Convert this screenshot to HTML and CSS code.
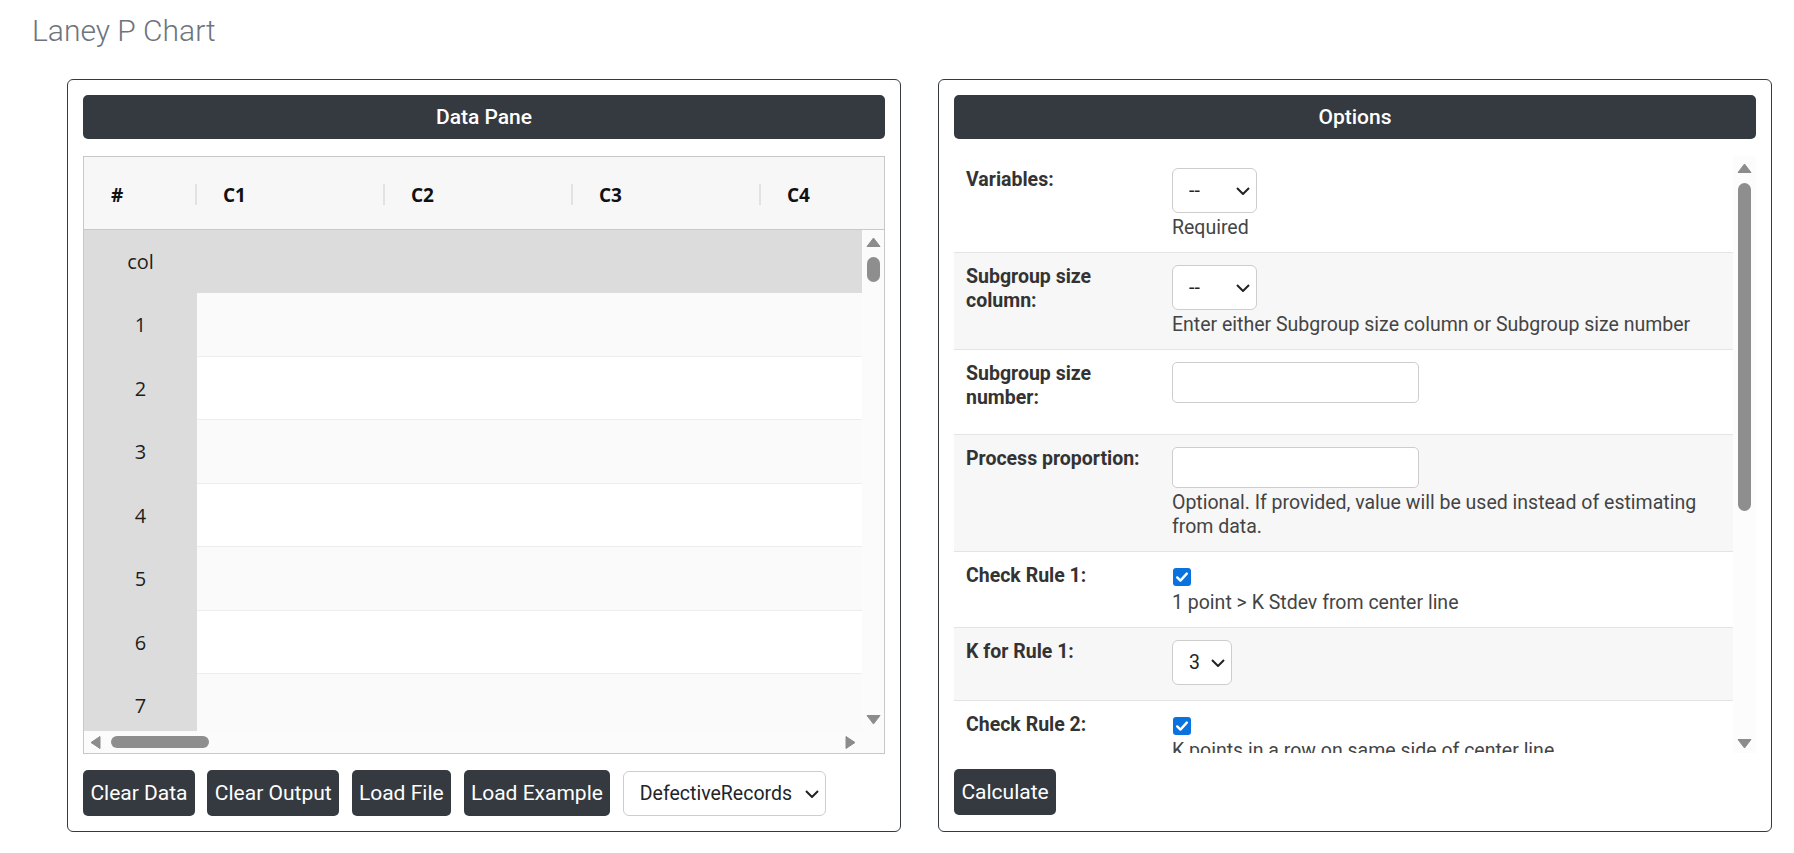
FILE: index.html
```html
<!DOCTYPE html>
<html lang="en">
<head>
    <meta charset="UTF-8">
    <meta name="viewport" content="width=device-width, initial-scale=1.0">
    <title>Laney P Chart</title>
    <link rel="stylesheet" href="styles.css">
</head>
<body>
    <h1 class="page-title">Laney P Chart</h1>

    <div class="panes">
        <!-- left: spreadsheet with the input data -->
        <section class="pane">
            <div class="pane-head">Data Pane</div>

            <div class="sheet">
                <div class="sheet-head">
                    <div class="hc idx"><span>#</span><i class="sep"></i></div>
                    <div class="hc"><span>C1</span><i class="sep"></i></div>
                    <div class="hc"><span>C2</span><i class="sep"></i></div>
                    <div class="hc"><span>C3</span><i class="sep"></i></div>
                    <div class="hc"><span>C4</span><i class="sep"></i></div>
                </div>

                <div class="sheet-body">
                    <div class="srow names">
                        <div class="rh">col</div>
                    </div>
                    <div class="srow"><div class="rh">1</div><div class="cell"></div><div class="cell"></div><div class="cell"></div><div class="cell"></div></div>
                    <div class="srow"><div class="rh">2</div><div class="cell"></div><div class="cell"></div><div class="cell"></div><div class="cell"></div></div>
                    <div class="srow"><div class="rh">3</div><div class="cell"></div><div class="cell"></div><div class="cell"></div><div class="cell"></div></div>
                    <div class="srow"><div class="rh">4</div><div class="cell"></div><div class="cell"></div><div class="cell"></div><div class="cell"></div></div>
                    <div class="srow"><div class="rh">5</div><div class="cell"></div><div class="cell"></div><div class="cell"></div><div class="cell"></div></div>
                    <div class="srow"><div class="rh">6</div><div class="cell"></div><div class="cell"></div><div class="cell"></div><div class="cell"></div></div>
                    <div class="srow"><div class="rh">7</div><div class="cell"></div><div class="cell"></div><div class="cell"></div><div class="cell"></div></div>
                    <div class="srow"><div class="rh">8</div><div class="cell"></div><div class="cell"></div><div class="cell"></div><div class="cell"></div></div>
                </div>

                <div class="vbar sheet-vbar">
                    <svg class="arrow" width="15" height="10" viewBox="0 0 15 10"><path d="M7.5 1 L14 9.5 H1 Z" /></svg>
                    <div class="thumb sheet-thumb"></div>
                    <div class="fill"></div>
                    <svg class="arrow" width="15" height="10" viewBox="0 0 15 10"><path d="M1 0.5 H14 L7.5 9 Z" /></svg>
                </div>

                <div class="hbar">
                    <svg class="arrow" width="11" height="13" viewBox="0 0 11 13"><path d="M1 6.5 L10 0.5 V12.5 Z" /></svg>
                    <div class="hthumb"></div>
                    <div class="fill"></div>
                    <svg class="arrow" width="11" height="13" viewBox="0 0 11 13"><path d="M10 6.5 L1 0.5 V12.5 Z" /></svg>
                </div>
            </div>

            <div class="toolbar">
                <button class="btn">Clear Data</button>
                <button class="btn">Clear Output</button>
                <button class="btn">Load File</button>
                <button class="btn">Load Example</button>
                <div class="pick">
                    <select class="example-pick">
                        <option>DefectiveRecords</option>
                    </select>
                    <svg class="chev" width="14" height="8" viewBox="0 0 14 8"><polyline points="1,1 7,7 13,1" /></svg>
                </div>
            </div>
        </section>

        <!-- right: chart options -->
        <section class="pane">
            <div class="pane-head">Options</div>

            <div class="opts">
                <div class="opt-list">
                    <div class="opt">
                        <div class="opt-label">Variables:</div>
                        <div class="opt-field">
                            <div class="pick">
                                <select class="col-pick"><option>--</option></select>
                                <svg class="chev" width="14" height="8" viewBox="0 0 14 8"><polyline points="1,1 7,7 13,1" /></svg>
                            </div>
                            <div class="note">Required</div>
                        </div>
                    </div>
                    <div class="opt">
                        <div class="opt-label">Subgroup size column:</div>
                        <div class="opt-field">
                            <div class="pick">
                                <select class="col-pick"><option>--</option></select>
                                <svg class="chev" width="14" height="8" viewBox="0 0 14 8"><polyline points="1,1 7,7 13,1" /></svg>
                            </div>
                            <div class="note">Enter either Subgroup size column or Subgroup size number</div>
                        </div>
                    </div>
                    <div class="opt">
                        <div class="opt-label">Subgroup size number:</div>
                        <div class="opt-field">
                            <input class="txt txt-last" type="text">
                        </div>
                    </div>
                    <div class="opt">
                        <div class="opt-label">Process proportion:</div>
                        <div class="opt-field">
                            <input class="txt" type="text">
                            <div class="note">Optional. If provided, value will be used instead of estimating from data.</div>
                        </div>
                    </div>
                    <div class="opt">
                        <div class="opt-label">Check Rule 1:</div>
                        <div class="opt-field">
                            <div class="check-line">
                                <span class="tick"><svg width="18" height="18" viewBox="0 0 18 18"><path d="M4.2 9.4 L7.4 12.6 L13.8 5.6" /></svg></span>
                            </div>
                            <div class="note">1 point &gt; K Stdev from center line</div>
                        </div>
                    </div>
                    <div class="opt">
                        <div class="opt-label">K for Rule 1:</div>
                        <div class="opt-field">
                            <div class="pick">
                                <select class="k-pick"><option>3</option></select>
                                <svg class="chev" width="14" height="8" viewBox="0 0 14 8"><polyline points="1,1 7,7 13,1" /></svg>
                            </div>
                        </div>
                    </div>
                    <div class="opt">
                        <div class="opt-label">Check Rule 2:</div>
                        <div class="opt-field">
                            <div class="check-line">
                                <span class="tick"><svg width="18" height="18" viewBox="0 0 18 18"><path d="M4.2 9.4 L7.4 12.6 L13.8 5.6" /></svg></span>
                            </div>
                            <div class="note">K points in a row on same side of center line</div>
                        </div>
                    </div>
                    <div class="opt">
                        <div class="opt-label">K for Rule 2:</div>
                        <div class="opt-field">
                            <div class="pick">
                                <select class="k-pick"><option>9</option></select>
                                <svg class="chev" width="14" height="8" viewBox="0 0 14 8"><polyline points="1,1 7,7 13,1" /></svg>
                            </div>
                        </div>
                    </div>
                </div>

                <div class="vbar opts-vbar">
                    <svg class="arrow" width="15" height="10" viewBox="0 0 15 10"><path d="M7.5 1 L14 9.5 H1 Z" /></svg>
                    <div class="thumb opts-thumb"></div>
                    <div class="fill"></div>
                    <svg class="arrow" width="15" height="10" viewBox="0 0 15 10"><path d="M1 0.5 H14 L7.5 9 Z" /></svg>
                </div>
            </div>

            <div class="toolbar">
                <button class="btn">Calculate</button>
            </div>
        </section>
    </div>
</body>
</html>
```

FILE: styles.css
```css
* {
    box-sizing: border-box;
}

body {
    margin: 0;
    font-family: Roboto, "Liberation Sans", sans-serif;
    color: #212529;
    background: #fff;
}

.page-title {
    margin: 12px 0 0 32px;
    font-size: 30px;
    font-weight: 300;
    line-height: 38px;
    color: #6c757d;
}

.panes {
    display: grid;
    grid-template-columns: 834px 834px;
    column-gap: 37px;
    margin: 29px 0 0 67px;
}

.pane {
    border: 1px solid #343a40;
    border-radius: 6px;
    padding: 15px;
}

.pane-head {
    height: 44px;
    line-height: 44px;
    text-align: center;
    background-color: #343a40;
    color: #fff;
    border-radius: 5px;
    font-size: 21px;
    font-weight: 500;
}

/* spreadsheet */
.sheet {
    margin-top: 17px;
    height: 598px;
    border: 1px solid #c8c8c8;
    background: #fbfbfb;
    display: grid;
    grid-template-columns: 1fr 22px;
    grid-template-rows: 73px 1fr 22px;
    font-family: "Open Sans", sans-serif;
}

.sheet-head {
    grid-column: 1 / 3;
    display: flex;
    background: #f7f7f7;
    border-bottom: 1px solid #c8c8c8;
    overflow: hidden;
    padding-top: 3px;
}

.hc {
    flex: 0 0 188px;
    display: flex;
    align-items: center;
    justify-content: space-between;
    padding-left: 26px;
    font-size: 19px;
    font-weight: 700;
    color: #111;
}

.hc.idx {
    flex-basis: 113px;
    padding-left: 27px;
}

.sep {
    width: 2px;
    height: 21px;
    background: #e2e2e2;
}

.sheet-body {
    overflow: hidden;
}

.srow {
    display: flex;
    height: 63.5px;
}

.srow.names {
    height: 63px;
    background: #dcdcdc;
}

.rh {
    flex: 0 0 113px;
    display: flex;
    align-items: center;
    justify-content: center;
    background: #dcdcdc;
    font-size: 20px;
    color: #1e1e1e;
}

.cell {
    flex: 0 0 188px;
    border-bottom: 1px solid #ededed;
    background: #fafafa;
}

.srow:nth-child(odd) .cell {
    background: #fff;
}

/* scrollbars */
.vbar {
    display: flex;
    flex-direction: column;
    align-items: center;
}

.sheet-vbar {
    grid-row: 2;
    grid-column: 2;
    padding: 7px 0 6px;
}

.opts-vbar {
    padding: 7px 0 4px;
    background: #fcfcfc;
}

.arrow path {
    fill: #8c8c8c;
    stroke: #8c8c8c;
    stroke-width: 1;
    stroke-linejoin: round;
}

.thumb {
    width: 13px;
    margin-top: 10px;
    border-radius: 7px;
    background: #8e8e8e;
}

.sheet-thumb {
    height: 25px;
}

.opts-thumb {
    height: 328px;
}

.fill {
    flex: 1;
}

.hbar {
    grid-row: 3;
    grid-column: 1;
    display: flex;
    align-items: center;
    padding: 0 6px;
}

.hthumb {
    width: 98px;
    height: 12px;
    margin-left: 10px;
    border-radius: 6px;
    background: #8e8e8e;
}

/* buttons and pickers */
.toolbar {
    margin-top: 16px;
    display: flex;
    align-items: center;
    gap: 12.5px;
}

.btn {
    height: 46px;
    padding: 0 7.4px;
    border: none;
    border-radius: 5px;
    background-color: #343a40;
    color: #fff;
    font-family: Roboto, sans-serif;
    font-size: 21px;
    cursor: pointer;
}

.pick {
    position: relative;
    display: inline-block;
}

.pick select {
    appearance: none;
    -webkit-appearance: none;
    height: 45px;
    border: 1px solid #cdcdcd;
    border-radius: 6px;
    background: #fff;
    color: #212529;
    font-family: Roboto, sans-serif;
    font-size: 19.5px;
    padding: 0 30px 0 16px;
}

.pick .chev {
    position: absolute;
    top: 19px;
    right: 7px;
}

.chev polyline {
    fill: none;
    stroke: #222;
    stroke-width: 2;
}

.example-pick {
    width: 203px;
}

.col-pick {
    width: 85px;
}

.k-pick {
    width: 60px;
}

/* option list */
.opts {
    margin-top: 17px;
    height: 597px;
    display: grid;
    grid-template-columns: 1fr 23px;
    overflow: hidden;
}

.opt-list {
    overflow: hidden;
}

.opt {
    display: grid;
    grid-template-columns: 206px 1fr;
    border-top: 1px solid #e4e4e4;
}

.opt:first-child {
    border-top: none;
}

.opt:nth-child(even) {
    background: #f7f7f7;
}

.opt-label {
    padding: 12px;
    font-size: 19.5px;
    font-weight: 700;
    line-height: 24px;
    color: #333;
}

.opt-field {
    padding: 12px;
    font-size: 19.5px;
    line-height: 24px;
    color: #444;
}

.opt-field .pick {
    display: block;
    width: max-content;
    margin-bottom: 3px;
}

.opt-field .pick select {
    display: block;
}

.k-pick {
    padding-left: 17px;
}

.txt {
    display: block;
    width: 247px;
    height: 41px;
    margin-bottom: 3px;
    border: 1px solid #cdcdcd;
    border-radius: 5px;
    background: #fff;
}

.txt-last {
    margin-bottom: 19px;
}

/* checkbox row: the box sits in a short line above its note */
.check-line {
    height: 26.5px;
    padding-top: 4px;
}

.tick {
    display: block;
    width: 18px;
    height: 18px;
    margin-left: 1px;
    border-radius: 3px;
    background: #0a72de;
}

.tick svg {
    display: block;
}

.tick path {
    fill: none;
    stroke: #fff;
    stroke-width: 2.4;
    stroke-linecap: round;
    stroke-linejoin: round;
}
```
